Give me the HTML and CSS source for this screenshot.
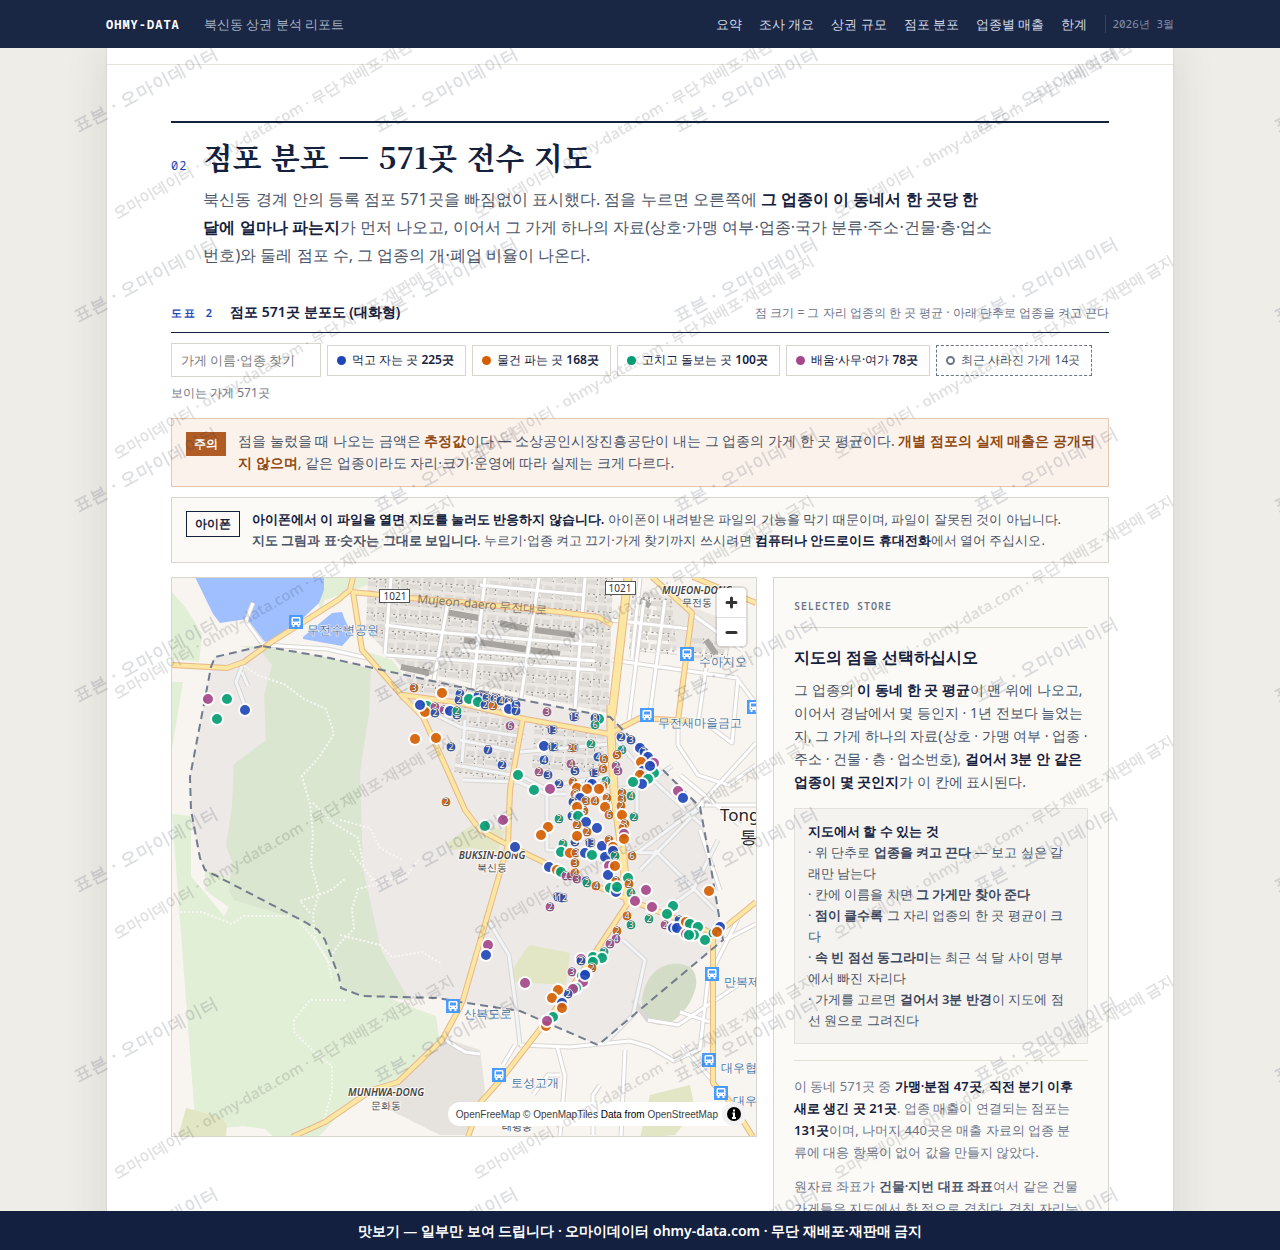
FILE: index.html
```html
<!DOCTYPE html>
<html lang="ko">
<head>
<meta charset="utf-8">
<title>북신동 상권 분석 리포트</title>
<link rel="stylesheet" href="styles.css">
</head>
<body>
<div class="shell">
  <header class="topbar">
    <div class="topbar-in">
      <b class="brand">OHMY-DATA</b>
      <span class="doc">북신동 상권 분석 리포트</span>
      <nav class="nav">
        <a href="#s0">요약</a><a href="#s1">조사 개요</a><a href="#sz">상권 규모</a><a href="#s2">점포 분포</a><a href="#s3">업종별 매출</a><a href="#s4">한계</a>
      </nav>
      <span class="date">2026년 3월</span>
    </div>
  </header>

  <main class="main">
    <article class="report">
      <div class="prev"></div>
      <section class="section" id="s2">
        <div class="head">
          <span class="num">02</span>
          <div>
            <h2>점포 분포 — 571곳 전수 지도</h2>
            <p class="lead">북신동 경계 안의 등록 점포 571곳을 빠짐없이 표시했다. 점을 누르면 오른쪽에 <b>그 업종이 이 동네서 한 곳당 한 달에 얼마나 파는지</b>가 먼저 나오고, 이어서 그 가게 하나의 자료(상호·가맹 여부·업종·국가 분류·주소·건물·층·업소번호)와 둘레 점포 수, 그 업종의 개·폐업 비율이 나온다.</p>
          </div>
        </div>

        <div class="figcap">
          <span class="fignum">도표 2</span>
          <h3>점포 571곳 분포도 (대화형)</h3>
          <span class="fignote">점 크기 = 그 자리 업종의 한 곳 평균 · 아래 단추로 업종을 켜고 끈다</span>
        </div>

        <div class="tools">
          <input class="search" type="text" aria-label="가게 이름·업종 찾기" placeholder="가게 이름·업종 찾기">
          <button class="chip" type="button"><i class="dot blue"></i><span>먹고 자는 곳 <b>225곳</b></span></button>
          <button class="chip" type="button"><i class="dot orange"></i><span>물건 파는 곳 <b>168곳</b></span></button>
          <button class="chip" type="button"><i class="dot green"></i><span>고치고 돌보는 곳 <b>100곳</b></span></button>
          <button class="chip" type="button"><i class="dot purple"></i><span>배움·사무·여가 <b>78곳</b></span></button>
          <button class="chip gone" type="button"><i class="dot ring"></i><span>최근 사라진 가게 14곳</span></button>
          <span class="count">보이는 가게 571곳</span>
        </div>

        <div class="note warn">
          <span class="tag">주의</span>
          <p>점을 눌렀을 때 나오는 금액은 <b>추정값</b>이다 — 소상공인시장진흥공단이 내는 그 업종의 가게 한 곳 평균이다. <b>개별 점포의 실제 매출은 공개되지 않으며</b>, 같은 업종이라도 자리·크기·운영에 따라 실제는 크게 다르다.</p>
        </div>
        <div class="note phone">
          <span class="tag">아이폰</span>
          <p><b>아이폰에서 이 파일을 열면 지도를 눌러도 반응하지 않습니다.</b> 아이폰이 내려받은 파일의 기능을 막기 때문이며, 파일이 잘못된 것이 아닙니다. <b class="soft">지도 그림과 표·숫자는 그대로 보입니다.</b> 누르기·업종 켜고 끄기·가게 찾기까지 쓰시려면 <b>컴퓨터나 안드로이드 휴대전화</b>에서 열어 주십시오.</p>
        </div>

        <div class="board">
          <div class="map">
            <svg class="map-svg" viewBox="172 578 584 558" preserveAspectRatio="xMidYMid slice" role="img" aria-label="북신동 점포 분포 지도">
              <defs>
                <pattern id="bld" width="22" height="17" patternUnits="userSpaceOnUse" patternTransform="rotate(4)">
                  <path fill="#dedad6" d="M1 1h9v6H1zM12 2h8v5h-8zM1 9h6v6H1zM9 10h11v5H9z"/>
                  <path fill="none" stroke="#8f8b87" stroke-width="1" stroke-dasharray="2 3" d="M1 7.500h9M12 7.500h8M7.500 9v6M20.500 9v6"/>
                </pattern>
                <g id="bus"><rect x="-7" y="-7" width="14" height="14" fill="#4a9bff"/><path fill="#fff" d="M-3.500-5h7l1 1v7h-1v2h-2v-2h-3v2h-2v-2h-1v-7z"/><path fill="#4a9bff" d="M-3-3.500h6v3h-6zM-3 1h1v1h-1zM2 1h1v1h-1z"/></g>
              </defs>
              <rect x="172" y="578" width="584" height="558" fill="#f8f4ef"/>
              <g fill="#e2efd7">
                <path d="M172 592l14 16 16 26-3 28-27-3zM172 682h11l-11 66zM172 814l19 2 0 60 33 40 11-20-3-29 100 55 18 60 64 26 22 8 7 50-14 30-29 8-30-8-10-4-46 50-36-1-13-12-22-3-28 3-20-10z"/>
                <path d="M323 578h60l-28 12-30 10-4 10-5-10zM362 650l30 10 15 20-12 6-24-22z"/>
              </g>
              <path fill="#a0bfff" d="M195 577l18 37 7 9 27-4 18 23 22-9 32-30 5-13v-13zM303 637l29-24 10-1 3 8 7 15-10 11-39-7z"/>
              <path fill="#ebe7e3" d="M368 578h245l-5 135-146-32-58-12-38-38zM650 590l75 30 5 30-60-2z"/>
              <path fill="#e6e2de" d="M430 1045l20-5 30 10 5 40-20 45h-25l-50-25-8-15 20-20z"/>
              <path fill="url(#bld)" d="M368 578h245l-5 135-146-32-58-12-38-38zM632 585l40 15 5 55-48-4zM690 635l40 10-3 15-38-2z"/>
              <path fill="#ede9e7" d="M262 646l-47 11-4 10-21 110 1 33 9 48 5 12 100 52 13 8 7 10 14 37 2 11 21 8 76 2 22 4 60 9 78 34 125-105-15-90-8-43-40-40-50-50-87-17-63-13-78-17-57-13z"/>
              <path fill="#e2efd7" d="M205 870l30 10 70 42 13 8 7 10 14 37 2 11-136-98z"/>
              <path fill="#dae6cf" d="M262 647l63 10 46 12-2 45-9 58 3 96 18 82 28 50-47-4-20-8-2-11-14-37-7-10-13-8-72-22-5-9 3-30-6-15 6-40 2-42 32-24-2-45 8-30-12-15-21-4z"/>
              <path fill="#e2e6c5" d="M477 821l28 10-8 22-25-5-20 2-6-6zM530 945l40 8-4 32-50-3-8-6 18-27zM650 1095l40-10 5 25-20 25-35 3zM186 1108l35 9 6 8-1 12h-48z"/>
              <path fill="#d3dcc6" d="M642 1000c2-18 12-34 30-36s28 8 23 26-22 36-35 35-19-10-18-25z"/>
              <g fill="url(#bld)"><path d="M405 672l55 13 60 13v38l-55-12-50-12zM468 728l50 10-8 45-60-12zM535 720l70 15-3 40-70-5z"/></g>
              <g fill="none" stroke="#a8a4a0" stroke-width="6"><path d="M445 612l34 6M500 623l27 6M535 630l40 5M464 640l62 9M515 648l45 6M401 667l28 6M706 640l10 14M640 600l10 6"/></g>
              <g class="minor-case"><path d="M391 578l-6 76M448 602l-14 78M485 578l-12 110M539 578l-18 120M585 578l-10 130M385 625l62 8 150 12M386 655l210 15M480 585l105 10M460 650l135 11M612 620l78 9M612 660l125 18M644 600l-15 120M665 600l-16 120M640 578l-8 80M692 614l50 36M738 678l-6 65-20-15M706 668l-8 55M735 676l21 28M265 645l62 4 40 9M262 643l-16-22 7-18M242 666l-6 16 9 24M242 672l6 14M400 697l60 30 65 10M465 720l-3 42M460 740l60 12 90-8M455 765l68 12 20 10 70-12M463 780l55 2 28 12h20M547 790v60l110 3M637 775v45M612 790l30-4 30-20M678 720v25l20 30 30 10 28-20M612 735l30 35 60 55M637 853l60-45 59-65M700 805h56M640 870l60-62M655 850l60 60M700 830l20 60M680 775l60 50M485 915l24 40 6 45 5 45 50 2 60-6 20 6 24 14 26-12 8-70 30-60M515 1045l-12 20M557 1046l8 30-5 60M625 1050l-4 86M560 1075h-12l-15 20M623 940l22 20-12 55-30 30M633 1000l15 20 30 5 60-40M680 1012l30 10M682 1045l30 35M600 1085l-7 10v40M445 1040l20 12 15 2M725 940l31-16M665 910l28-20 25-50"/></g>
              <g class="white-roads"><path d="M391 578l-6 76M448 602l-14 78M485 578l-12 110M539 578l-18 120M585 578l-10 130M385 625l62 8 150 12M386 655l210 15M480 585l105 10M460 650l135 11M612 620l78 9M612 660l125 18M644 600l-15 120M665 600l-16 120M640 578l-8 80M692 614l50 36M738 678l-6 65-20-15M706 668l-8 55M735 676l21 28M265 645l62 4 40 9M262 643l-16-22 7-18M678 720v25l20 30 30 10 28-20M697 808l59-65M700 805h56M700 830l20 60M680 775l60 50M520 1045l50 2 60-6 20 6 24 14 26-12 8-70 30-60M515 1045l-12 20M557 1046l8 30-5 60M625 1050l-4 86M560 1075h-12l-15 20M648 1020l30 5 60-40M680 1012l30 10M682 1045l30 35M600 1085l-7 10v40M445 1040l20 12 15 2M725 940l31-16"/></g>
              <g class="inner-roads"><path d="M242 666l-6 16 9 24M242 672l6 14M400 697l60 30 65 10M465 720l-3 42M460 740l60 12 90-8M455 765l68 12 20 10 70-12M463 780l55 2 28 12h20M547 790v60l110 3M637 775v45M612 790l30-4 30-20M612 735l30 35 60 55M637 853l60-45M640 870l60-62M655 850l60 60M485 915l24 40 6 45 5 45M623 940l22 20-12 55-30 30M665 910l28-20 25-50"/></g>
              <g class="trail"><path d="M244 666l15 10 25 8 20 15 22 10 8 25-14 22-18 20 8 28 3 30-2 30 8 30-6 20 2 25 12 20 5 20M313 803l20 20 25 15 6 30M340 820l30 8 10 20 22 12M350 850l20 26 8 8-20 5-6 20 2 20-15 15-8 12M370 880l35-2 15-20M172 912h30l30 12 12-8h50l18 20 18 28 10 8M310 913l-10-12 30-10 15-12M340 935l40 10 12 12 30-5 20 12M345 1000l-35 0-16 20 0 12 20 20 18 14 0 25-8 30"/></g>
              <g class="road-case"><path d="M172 665l55 3 17-6 26-19 68-43 12-10 3-13M352 592l58 6 50 4 100 10 38 5 14 8M353 592l9 58 41 47 20 20 22 48 20 45 15 20 28 15 60 29 59 25 65 26 21 8M403 695l57 8 65 16 84 15 31-16 50 3M523 718l-13 72-2 55-45 155-3 7-18 33-44 42-26 8-47 32-33 15M628 903l-60 90-65 84-23 26-12 34M713 937l43-35M713 938v145l20 22 20 32M652 577l40 36-14 107M693 577l63 26"/><path class="big" d="M628 577l-16 138M611 705v28l3 57 8 60 6 53"/></g>
              <g class="road"><path d="M172 665l55 3 17-6 26-19 68-43 12-10 3-13M352 592l58 6 50 4 100 10 38 5 14 8M353 592l9 58 41 47 20 20 22 48 20 45 15 20 28 15 60 29 59 25 65 26 21 8M403 695l57 8 65 16 84 15 31-16 50 3M523 718l-13 72-2 55-45 155-3 7-18 33-44 42-26 8-47 32-33 15M628 903l-60 90-65 84-23 26-12 34M713 937l43-35M713 938v145l20 22 20 32M652 577l40 36-14 107M693 577l63 26"/><path class="big" d="M628 577l-16 138M611 705v28l3 57 8 60 6 53"/></g>
              <path class="bound" d="M262 646l-47 11-4 10-21 110 1 33 9 48 5 12 100 52 13 8 7 10 14 37 2 11 21 8 76 2 22 4 60 9 78 34 125-105-15-90-8-43-40-40-50-50-87-17-63-13-78-17-57-13z"/>
              <g class="shield"><rect x="379.500" y="589.500" width="30" height="13"/><text x="395" y="600">1021</text><rect x="605.500" y="581.500" width="30" height="13"/><text x="620" y="592">1021</text></g>
              <text class="street" transform="translate(417 603) rotate(5)">Mujeon-daero 무전대로</text>
              <g class="dong"><text x="492" y="859">BUKSIN-DONG</text><text x="697" y="594">MUJEON-DONG</text><text x="386" y="1096">MUNHWA-DONG</text></g>
              <g class="dong-ko"><text x="492" y="871">북신동</text><text x="697" y="606">무전동</text><text x="386" y="1109">문화동</text><text x="517" y="1130">태평동</text></g>
              <g class="city"><text x="720" y="821">Tongyeong</text><text x="740" y="843">통영시</text></g>
              <g class="stop"><text x="307" y="634">무전수변공원</text><text x="699" y="666">수아지오</text><text x="658" y="727">무전새마을금고</text><text x="464" y="1018">산복도로</text><text x="511" y="1087">토성고개</text><text x="724" y="986">만복제일</text><text x="721" y="1072">대우협동</text><text x="733" y="1105">대우</text></g>
              <use href="#bus" x="296" y="622"/><use href="#bus" x="687" y="654"/><use href="#bus" x="647" y="715"/><use href="#bus" x="754" y="707"/><use href="#bus" x="453" y="1006"/><use href="#bus" x="499" y="1075"/><use href="#bus" x="712" y="974"/><use href="#bus" x="709" y="1060"/><use href="#bus" x="721" y="1093"/>
              <g id="stores" class="stores"></g>
            </svg>
            <div class="zoomer">
              <button type="button" aria-label="확대"><svg width="29" height="29" viewBox="0 0 29 29"><path d="M14.500 10v9M10 14.500h9" stroke="#333" stroke-width="3" stroke-linecap="round"/></svg></button>
              <button type="button" aria-label="축소"><svg width="29" height="29" viewBox="0 0 29 29"><path d="M10 14.500h9" stroke="#333" stroke-width="3" stroke-linecap="round"/></svg></button>
            </div>
            <div class="attrib">
              <span><a href="#f">OpenFreeMap</a> <a href="#t">© OpenMapTiles</a> Data from <a href="#o">OpenStreetMap</a></span>
              <svg width="24" height="24" viewBox="0 0 24 24"><circle cx="12" cy="12" r="12" fill="#f2f2f2"/><circle cx="12" cy="12" r="7" fill="#000"/><path d="M12 7.500v2M10.500 11.500H12v4.500M10 16h4" stroke="#fff" stroke-width="2" fill="none"/></svg>
            </div>
          </div>

          <aside class="panel">
            <div class="panel-label">SELECTED STORE</div>
            <h4>지도의 점을 선택하십시오</h4>
            <p class="intro">그 업종의 <b>이 동네 한 곳 평균</b>이 맨 위에 나오고, 이어서 경남에서 몇 등인지 · 1년 전보다 늘었는지, 그 가게 하나의 자료(상호 · 가맹 여부 · 업종 · 주소 · 건물 · 층 · 업소번호), <b>걸어서 3분 안 같은 업종이 몇 곳인지</b>가 이 칸에 표시된다.</p>
            <div class="hint">
              <b class="hint-title">지도에서 할 수 있는 것</b>
              <div>· 위 단추로 <b>업종을 켜고 끈다</b> — 보고 싶은 갈래만 남는다</div>
              <div>· 칸에 이름을 치면 <b>그 가게만 찾아 준다</b></div>
              <div>· <b>점이 클수록</b> 그 자리 업종의 한 곳 평균이 크다</div>
              <div>· <b>속 빈 점선 동그라미</b>는 최근 석 달 사이 명부에서 빠진 자리다</div>
              <div>· 가게를 고르면 <b>걸어서 3분 반경</b>이 지도에 점선 원으로 그려진다</div>
            </div>
            <div class="foot">
              <p>이 동네 571곳 중 <b>가맹·분점 47곳</b>, <b>직전 분기 이후 새로 생긴 곳 21곳</b>. 업종 매출이 연결되는 점포는 <b>131곳</b>이며, 나머지 440곳은 매출 자료의 업종 분류에 대응 항목이 없어 값을 만들지 않았다.</p>
              <p>원자료 좌표가 <b class="soft">건물·지번 대표 좌표</b>여서 같은 건물 가게들은 지도에서 한 점으로 겹친다. 겹친 자리는 숫자로 표시했다.</p>
            </div>
          </aside>
        </div>
      </section>
      <svg class="mark" aria-hidden="true">
        <defs><pattern id="wm2" y="-50" width="360" height="240" patternUnits="userSpaceOnUse"><text class="wm2" transform="translate(10 221) rotate(-30)">오마이데이터 · ohmy-data.com · 무단 재배포·재판매 금지</text></pattern></defs>
        <rect width="100%" height="100%" fill="url(#wm2)"/>
      </svg>
    </article>
  </main>

  <svg class="mark" aria-hidden="true">
    <defs><pattern id="wm1" width="300" height="190" patternUnits="userSpaceOnUse"><text class="wm1" transform="translate(78 132) rotate(-28)">표본 · 오마이데이터</text></pattern></defs>
    <rect width="100%" height="100%" fill="url(#wm1)"/>
  </svg>
  <footer class="bottombar">맛보기 — 일부만 보여 드립니다 · 오마이데이터 ohmy-data.com · 무단 재배포·재판매 금지</footer>
</div>
<script src="map.js"></script>
</body>
</html>
```

FILE: styles.css
```css
* { box-sizing: border-box; }
body {
  margin: 0;
  background: #eeede8;
  color: #4a5568;
  font-family: "Noto Sans", sans-serif;
  font-size: 14px;
}
h2, h3, h4, p { margin: 0; }
b { font-weight: 600; color: #14213d; }
b.soft { color: #4a5568; }
a { color: inherit; text-decoration: none; }
button, input { font: inherit; color: inherit; }

.shell { position: relative; height: 100vh; display: flex; flex-direction: column; overflow: hidden; }
.topbar { position: relative; z-index: 3; background: #1a2744; flex: none; }
.topbar-in { max-width: 1068px; height: 48px; margin: 0 auto; display: flex; align-items: center; }
.brand { color: #fff; font: 700 12px "Noto Sans Mono", "DejaVu Sans Mono", monospace; letter-spacing: 1px; margin-right: 24px; }
.doc { color: #a9b3c8; font-size: 13px; }
.nav { margin-left: auto; display: flex; gap: 17px; font-size: 13px; color: #d3d9e6; }
.date { margin-left: 18px; padding-left: 6px; border-left: 1px solid #34415f; color: #8390aa; font: 11px/18px "Noto Sans Mono", "DejaVu Sans Mono", monospace; }

.main { flex: 1; min-height: 0; overflow-y: auto; scrollbar-width: none; }
.report {
  position: relative;
  max-width: 1068px;
  margin: 0 auto;
  background: #fff;
  border: solid #dcd9d2;
  border-width: 0 1px;
  box-shadow: 0 0 40px rgba(60, 50, 30, .12);
  overflow: hidden;
}
.prev { height: 17px; border-bottom: 1px solid #e6e3da; }
.section { padding: 56px 64px; }
.head { display: flex; gap: 16px; border-top: 2px solid #14213d; padding-top: 11px; }
.num { font: 12px "Noto Sans Mono", "DejaVu Sans Mono", monospace; letter-spacing: 1px; color: #1d46b8; padding-top: 23px; }
h2 { font: 700 30px/44px "Noto Serif CJK KR", "Noto Serif KR", "Liberation Serif", "Noto Sans CJK KR", serif; color: #14213d; }
.lead { font-size: 16px; line-height: 28px; max-width: 792px; padding-top: 7px; }

.figcap { display: flex; align-items: baseline; margin-top: 32px; padding-bottom: 8px; border-bottom: 1px solid #14213d; line-height: 22px; }
.fignum { font: 600 11px "Noto Sans Mono", "DejaVu Sans Mono", monospace; letter-spacing: 2px; color: #1d46b8; margin-right: 16px; }
h3 { font-size: 14px; font-weight: 600; color: #14213d; }
.fignote { margin-left: auto; font-size: 12px; color: #6b7489; }

.tools { display: flex; flex-wrap: wrap; align-items: center; gap: 6px; padding: 10px 0 15px; }
.search { width: 150px; height: 34px; border: 1px solid #d8d5cc; background: #fff; padding: 0 9px; font-size: 13px; }
.search::placeholder { color: #7b7b7b; }
.chip { display: flex; align-items: center; gap: 6px; height: 31px; padding: 0 11px 0 9px; border: 1px solid #d8d5cc; background: #fff; font-size: 12px; color: #14213d; white-space: nowrap; }
.dot { width: 9px; height: 9px; border-radius: 50%; }
.blue { background: #1d46b8; }
.orange { background: #d55e00; }
.green { background: #009e73; }
.purple { background: #a4478b; }
.ring { border: 2px solid #6b7489; }
.gone { border: 1px dashed #6b7489; color: #4a5568; }
.count { flex-basis: 100%; font-size: 12px; line-height: 20px; color: #6b7489; }

.note { display: flex; align-items: flex-start; gap: 12px; border: 1px solid; padding: 11px 14px; }
.tag { flex: none; font-size: 12px; font-weight: 600; line-height: 16px; }
.warn { background: #fcf2ec; border-color: #e5c8ad; font-size: 14px; line-height: 22px; padding: 11px 8px 12px 14px; }
.warn b { color: #8f4a14; }
.warn .tag { background: #b05c24; color: #fff; padding: 4px 8px; margin-top: 2px; }
.phone { background: #fbfaf7; border-color: #d8d5cc; font-size: 13px; line-height: 21px; margin: 10px 0 14px; padding-right: 40px; }
.phone .tag { border: 1px solid #14213d; color: #14213d; padding: 4px 8px; margin-top: 2px; }

.board { display: grid; grid-template-columns: 1fr 336px; gap: 16px; align-items: start; }
.map { position: relative; height: 560px; border: 1px solid #d8d5cc; overflow: hidden; }
.map-svg { display: block; width: 100%; height: 100%; }
.minor-case { fill: none; stroke: #d9d6d4; stroke-width: 5; stroke-linejoin: round; }
.white-roads { fill: none; stroke: #fff; stroke-width: 3; stroke-linejoin: round; }
.inner-roads { fill: none; stroke: #f3f4f5; stroke-width: 3; stroke-linejoin: round; }
.trail { fill: none; stroke: #f7f6f2; stroke-width: 2; stroke-dasharray: 2 2; }
.road-case { fill: none; stroke: #e8b78a; stroke-width: 6; stroke-linejoin: round; }
.road { fill: none; stroke: #fbe6a2; stroke-width: 4; stroke-linejoin: round; }
.road-case .big { stroke-width: 9; }
.road .big { stroke-width: 7; }
.bound { fill: none; stroke: #737b8e; stroke-width: 2; stroke-dasharray: 8 5; }
.shield rect { fill: #fff; stroke: #555; }
.shield text { font-size: 10px; text-anchor: middle; fill: #333; }
.street { font-size: 12px; fill: #85796a; }
.dong text, .dong-ko text { text-anchor: middle; font-size: 10px; fill: #444; paint-order: stroke; stroke: #fff; stroke-width: 2px; stroke-opacity: .8; }
.dong text { font-style: italic; font-weight: 600; }
.city { font-size: 17px; fill: #222; paint-order: stroke; stroke: #fff; stroke-width: 2px; }
.stop { font-size: 12px; fill: #4a75a0; paint-order: stroke; stroke: #fff; stroke-width: 1px; }
.stores circle { stroke: #fff; stroke-width: 2px; opacity: .9; }
.stores circle.stack { stroke-width: 1px; }
.stores text { font-size: 9px; fill: #fff; text-anchor: middle; paint-order: stroke; stroke: #555; stroke-width: 1px; }
.zoomer { position: absolute; top: 10px; right: 10px; width: 29px; border-radius: 4px; background: #fff; box-shadow: 0 0 0 2px rgba(0, 0, 0, .1); }
.zoomer button { display: block; width: 29px; height: 29px; padding: 0; border: 0; background: none; }
.zoomer button + button { border-top: 1px solid #ddd; }
.attrib { position: absolute; right: 10px; bottom: 10px; height: 24px; display: flex; align-items: center; gap: 4px; padding-left: 8px; border-radius: 12px; background: #fff; color: #000; font: 10px "Liberation Sans", Arial, sans-serif; }
.attrib a { color: #404040; }

.panel { border: 1px solid #d8d5cc; background: #fbfaf7; padding: 19px 20px; }
.panel-label { font: 600 10px/18px "Noto Sans Mono", "DejaVu Sans Mono", monospace; letter-spacing: 1px; color: #6b7489; padding-bottom: 12px; border-bottom: 1px solid #d8d5cc; }
h4 { font-size: 16px; font-weight: 600; line-height: 24px; color: #14213d; margin: 17px 0 9px; }
.intro { font-size: 14px; line-height: 23px; }
.hint { margin: 15px 0 16px; padding: 12px 13px; border: 1px solid #e3e1db; background: #f4f3f0; font-size: 13px; line-height: 21px; }
.hint div b { color: #3c475d; }
.hint-title { display: block; }
.foot { border-top: 1px solid #e3e1d8; padding: 14px 6px 0 0; font-size: 13px; line-height: 22px; color: #6b7489; }
.foot p + p { margin-top: 12px; }

.mark { position: absolute; inset: 0; width: 100%; height: 100%; pointer-events: none; z-index: 2; }
.wm1 { font-size: 17px; font-weight: 700; letter-spacing: 1px; fill: #14213d; fill-opacity: .15; }
.wm2 { font-size: 15px; font-weight: 600; fill: #000; fill-opacity: .12; }
.bottombar { position: relative; z-index: 3; flex: none; background: #13203f; color: #fff; text-align: center; font-size: 14px; font-weight: 600; line-height: 39px; }
```

FILE: map.js
```js
// Each store: colour key, x, y and, for stacked shops, how many share the spot.
const COLORS = { b: "#1d46b8", o: "#d55e00", g: "#009e73", p: "#a4478b" };
const STORES = `p208,699 g227,699 b245,710 g217,719 o414,688,3 o442,693 g427,706 o425,712 b420,705 p435,707,2 b435,713,2 p444,710,2 b450,711 b457,715,2 g457,711,2
o415,739 o436,738 b451,747,2 o446,802,2 b460,694,2 b459,700,2 g469,699 b478,696,7 g478,702 b487,698,3 b485,705,2 b495,699,8 o493,706,2 b501,701,4 b509,702,8 b509,709 b516,705,5 b516,711,7
p547,712,3 b574,717,15 g599,719 b595,718,8 g595,725,6 p510,726,6 b552,730,13 b544,746 b553,747,12 o573,748,20 g591,744,2 b544,760,4 b488,750,7 b502,765,2 g518,775 p539,772,2 b548,775,3 p571,764,4 b559,784,2 g534,790 p550,789 b575,771,5
b621,737,2 b631,740,3 g622,750,4 o617,755,5 b598,757,4 o604,759,6 p616,766,2 p618,771,3 o603,769,6 b594,773,13 b640,748 b644,752,3 b648,757 o641,762 p654,763 b643,771 g654,773 b650,766 o640,775 g648,779 b642,784 g633,782
o573,782,3 o577,788 b589,783,6 b592,784 o587,789 g606,781,4 o603,786,2 o599,789 o575,794,8 b580,798 b573,802,3 o586,801,3 o595,801,4 o607,798,2 o622,793,2 o622,799,3 g631,796,4 o584,811,5 o577,807 o605,807 o609,815,6 o621,806,2 o622,815 g634,817,2 g559,819,2 b572,816,2 g578,816 b586,822 b597,828 o577,825,2 o587,832,2 o625,824,3 o623,828,2 p624,834 o624,839
p503,820 g485,826 o548,827 o541,835 b515,847 b575,842,5 o577,836 b590,843,13 g563,844,2 g561,852 o570,853 o576,853,3 b585,853 b602,846 g592,855 o609,840,3 b605,857 o613,847 b613,851 g615,856,2 o632,856,6 o575,863,3 p609,866
b549,867 o557,870 g561,872 p566,876,2 p571,876,3 o575,873,4 p577,879,3 b586,881,4 g587,883,2 o596,886,4 b608,875 o615,866 o616,881,2 g610,888 b616,892 g617,887 g628,878 o629,884,2 g631,893,4 b558,897,10 b562,898,12 p550,907,2 p646,890 p635,901 p652,907 o627,916,4 g631,925,3 g649,919,2 o617,931,2 p616,939,4 p610,944,2
g673,906 g667,914 p665,925,2 b679,920,2 b673,928 b677,928 o686,922 g690,924 p686,934 g698,927 g694,935 g689,935 g705,940 b720,927 g713,933,2 o717,932 o709,891 p678,791 b683,798
p488,945 b486,955 p525,983 g604,952,2 g593,957 g602,958 g593,962 o592,968,2 p581,959 b581,961,2 p572,972,3 g582,976 b586,974 p583,982 b585,975 g576,988 p573,989 b568,994,2 o558,990 o552,998 b562,1003 o562,1008 g553,1017 o546,1026 p547,1021`;

const NS = "http://www.w3.org/2000/svg";
const layer = document.getElementById("stores");
for (const item of STORES.split(/\s+/)) {
  const [x, y, n] = item.slice(1).split(",");
  const c = document.createElementNS(NS, "circle");
  c.setAttribute("cx", x);
  c.setAttribute("cy", y);
  c.setAttribute("r", n ? 5 : 6);
  c.setAttribute("fill", COLORS[item[0]]);
  if (n) c.setAttribute("class", "stack");
  layer.appendChild(c);
  if (n) {
    const t = document.createElementNS(NS, "text");
    t.setAttribute("x", x);
    t.setAttribute("y", Number(y) + 3);
    t.textContent = n;
    layer.appendChild(t);
  }
}
```
